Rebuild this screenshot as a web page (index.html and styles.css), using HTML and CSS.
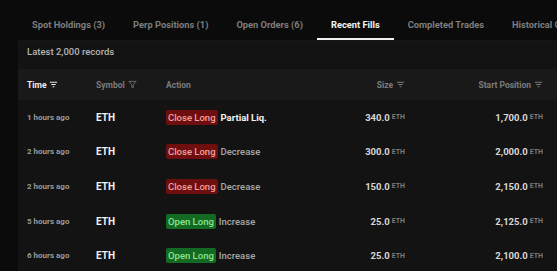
FILE: index.html
```html
<!DOCTYPE html>
<html lang="en">

<head>
  <meta charset="UTF-8">
  <meta name="viewport" content="width=device-width, initial-scale=1.0">
  <title>Recent Fills</title>
  <link rel="stylesheet" href="styles.css">
</head>

<body>
  <div class="wrap">
    <nav class="tabs">
      <button class="tab">Spot Holdings (3)</button>
      <button class="tab">Perp Positions (1)</button>
      <button class="tab">Open Orders (6)</button>
      <button class="tab active">Recent Fills</button>
      <button class="tab">Completed Trades</button>
      <button class="tab">Historical Orders</button>
    </nav>

    <section class="panel">
      <div class="records">Latest 2,000 records</div>

      <div class="grid head">
        <div class="cell sorted">Time <svg class="ico" viewBox="0 0 10 8"><path d="M1 1.5h8M2.5 4h5M4 6.5h2" stroke="currentColor" stroke-width="1.1"/></svg></div>
        <div class="cell">Symbol <svg class="ico" viewBox="0 0 10 10"><path d="M1 1.5h8L5.8 5.3v3.4L4.2 8V5.3z" fill="none" stroke="currentColor" stroke-width="0.9" stroke-linejoin="round"/></svg></div>
        <div class="cell">Action</div>
        <div class="cell num">Size <svg class="ico" viewBox="0 0 10 8"><path d="M1 1.5h8M2.5 4h5M4 6.5h2" stroke="currentColor" stroke-width="1.1"/></svg></div>
        <div class="cell num">Start Position <svg class="ico" viewBox="0 0 10 8"><path d="M1 1.5h8M2.5 4h5M4 6.5h2" stroke="currentColor" stroke-width="1.1"/></svg></div>
      </div>

      <div class="grid row">
        <div class="cell ago">1 hours ago</div>
        <div class="cell sym">ETH</div>
        <div class="cell"><span class="badge red">Close Long</span><span class="kind strong">Partial Liq.</span></div>
        <div class="cell num"><b>340.0</b> <small>ETH</small></div>
        <div class="cell num"><b>1,700.0</b> <small>ETH</small></div>
      </div>
      <div class="grid row">
        <div class="cell ago">2 hours ago</div>
        <div class="cell sym">ETH</div>
        <div class="cell"><span class="badge red">Close Long</span><span class="kind">Decrease</span></div>
        <div class="cell num"><b>300.0</b> <small>ETH</small></div>
        <div class="cell num"><b>2,000.0</b> <small>ETH</small></div>
      </div>
      <div class="grid row">
        <div class="cell ago">2 hours ago</div>
        <div class="cell sym">ETH</div>
        <div class="cell"><span class="badge red">Close Long</span><span class="kind">Decrease</span></div>
        <div class="cell num"><b>150.0</b> <small>ETH</small></div>
        <div class="cell num"><b>2,150.0</b> <small>ETH</small></div>
      </div>
      <div class="grid row">
        <div class="cell ago">5 hours ago</div>
        <div class="cell sym">ETH</div>
        <div class="cell"><span class="badge green">Open Long</span><span class="kind">Increase</span></div>
        <div class="cell num"><b>25.0</b> <small>ETH</small></div>
        <div class="cell num"><b>2,125.0</b> <small>ETH</small></div>
      </div>
      <div class="grid row">
        <div class="cell ago">6 hours ago</div>
        <div class="cell sym">ETH</div>
        <div class="cell"><span class="badge green">Open Long</span><span class="kind">Increase</span></div>
        <div class="cell num"><b>25.0</b> <small>ETH</small></div>
        <div class="cell num"><b>2,100.0</b> <small>ETH</small></div>
      </div>
    </section>
  </div>
</body>

</html>
```

FILE: styles.css
```css
body {
  margin: 0;
  font-family: Roboto, 'Liberation Sans', sans-serif;
  background-color: #0b0b0b;
  color: #ddd;
  overflow: hidden;
}

.wrap {
  padding-left: 18px;
  width: 700px;
}

.tabs {
  display: flex;
  height: 41px;
  border-bottom: 1px solid #161616;
  box-sizing: border-box;
}

.tab {
  background: none;
  border: none;
  border-bottom: 2px solid transparent;
  padding: 11px 14px 0;
  font-family: inherit;
  font-size: 9.3px;
  font-weight: 700;
  color: #7e7e7e;
  white-space: nowrap;
  cursor: pointer;
}

.tab.active {
  color: #f4f4f4;
  border-bottom-color: #f0f0f0;
}

.panel {
  background-color: #131313;
}

.records {
  height: 28px;
  line-height: 22px;
  padding-left: 9px;
  font-size: 9.5px;
  font-weight: 500;
  color: #b4b4b4;
}

.grid {
  display: grid;
  grid-template-columns: 69px 70px 150px 89px 138px 1fr;
  padding-left: 9px;
  align-items: center;
}

.head {
  height: 31px;
  background-color: #191919;
  font-size: 8.5px;
  font-weight: 700;
  color: #7c7c7c;
}

.row {
  height: 34.6px;
}

.cell {
  display: flex;
  align-items: center;
  white-space: nowrap;
}

.cell.num {
  justify-content: flex-end;
}

.sorted {
  color: #eee;
}

.ico {
  width: 9px;
  height: 9px;
  margin-left: 3px;
}

.ago {
  font-size: 8px;
  font-weight: 700;
  color: #9a9a9a;
}

.sym {
  font-size: 10px;
  font-weight: 700;
  color: #f2f2f2;
}

.badge {
  font-size: 9.5px;
  font-weight: 500;
  padding: 2px 2px;
  border-radius: 2px;
  line-height: 11px;
}

.badge.red {
  background-color: #6e0e0e;
  color: #f0a2a2;
}

.badge.green {
  background-color: #136a22;
  color: #8fe48f;
}

.kind {
  margin-left: 3px;
  font-size: 9.5px;
  font-weight: 500;
  color: #a8a8a8;
}

.kind.strong {
  color: #f2f2f2;
  font-weight: 700;
}

.num b {
  font-size: 9.5px;
  color: #d8d8d8;
}

.num small {
  font-size: 7px;
  font-weight: 700;
  color: #7a7a7a;
  margin-left: 2px;
}
```
